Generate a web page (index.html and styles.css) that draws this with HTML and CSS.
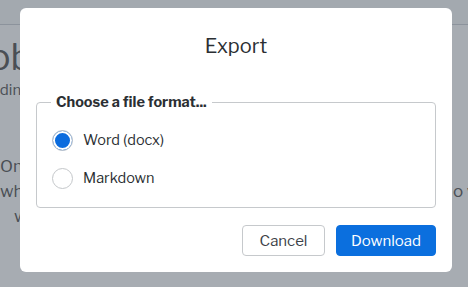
FILE: index.html
```html
<!DOCTYPE html>
<html lang="en">
<head>
  <meta charset="UTF-8">
  <meta name="viewport" content="width=device-width, initial-scale=1.0">
  <title>Export</title>
  <link rel="stylesheet" href="styles.css">
</head>
<body>
  <div class="page">
    <div class="topbar"></div>
    <div class="content">
      <h1>Job</h1>
      <p class="sub">Loading</p>
      <p class="para">On</p>
      <p class="para split"><span>wh</span><span>o v</span></p>
      <p class="para indent">wa</p>
    </div>
  </div>

  <div class="overlay"></div>

  <div class="modal">
    <h2>Export</h2>
    <fieldset class="formats">
      <legend>Choose a file format...</legend>
      <label class="option">
        <input type="radio" name="format" value="docx" checked>
        <span>Word (docx)</span>
      </label>
      <label class="option">
        <input type="radio" name="format" value="md">
        <span>Markdown</span>
      </label>
    </fieldset>
    <div class="actions">
      <button class="btn cancel">Cancel</button>
      <button class="btn primary">Download</button>
    </div>
  </div>
</body>
</html>
```

FILE: styles.css
```css
body {
  margin: 0;
  font-family: 'Libre Franklin', 'Noto Sans', sans-serif;
  color: #2b2f33;
  background: #fff;
  height: 287px;
  overflow: hidden;
}
.page {
  width: 100%;
}
.topbar {
  height: 24px;
  border-bottom: 1px solid #c9cdd2;
  background: #f7f8f9;
}
.content {
  margin-left: -26px;
  color: #444;
}
.content h1 {
  font-weight: normal;
  font-size: 36px;
  margin: 10px 0 0;
  line-height: 44px;
}
.content .sub {
  margin: 2px 0 0;
  font-size: 15px;
  margin-left: 0;
}
.content .para {
  margin: 6px 0 0 26px;
  font-size: 17px;
  line-height: 19px;
}
.content .para:nth-of-type(2) {
  margin-top: 58px;
}
.content .split {
  display: flex;
  justify-content: space-between;
  margin-right: -8px;
}
.content .indent {
  margin-left: 40px;
}
.overlay {
  position: fixed;
  inset: 0;
  background: rgba(80, 90, 102, 0.5);
}
.modal {
  position: fixed;
  left: 20px;
  top: 8px;
  width: 432px;
  height: 264px;
  box-sizing: border-box;
  background: #fff;
  border-radius: 6px;
  padding: 0 16px 16px;
  display: flex;
  flex-direction: column;
}
.modal h2 {
  margin: 0;
  font-weight: normal;
  font-size: 20px;
  text-align: center;
  line-height: 28px;
  padding-top: 24px;
  height: 85px;
  box-sizing: border-box;
  color: #2b2f33;
}
.formats {
  margin: 0;
  border: 1px solid #c6c9cc;
  border-radius: 4px;
  padding: 10px 14px 14px;
  height: 115px;
  box-sizing: border-box;
}
.formats legend {
  font-weight: bold;
  font-size: 14.5px;
  padding: 0 5px;
  margin-left: 0;
  color: #2b2f33;
}
.option {
  display: flex;
  align-items: center;
  gap: 10px;
  font-size: 14.5px;
  height: 38px;
  margin-left: 1px;
  color: #2b2f33;
}
.option input {
  appearance: none;
  margin: 0;
  width: 21px;
  height: 21px;
  border: 1px solid #c4c7ca;
  border-radius: 50%;
  background: #fff;
  box-sizing: border-box;
}
.option input:checked {
  background: #0a6bde;
  box-shadow: inset 0 0 0 2px #fff;
}
.actions {
  margin-top: auto;
  display: flex;
  justify-content: flex-end;
  gap: 11px;
}
.btn {
  height: 31px;
  font-family: inherit;
  font-size: 15px;
  border-radius: 4px;
  cursor: pointer;
}
.cancel {
  width: 83px;
  background: #fff;
  border: 1px solid #c6c9cc;
  color: #3d4248;
}
.primary {
  width: 100px;
  background: #0b6fde;
  border: 1px solid #0b6fde;
  color: #fff;
}
```
